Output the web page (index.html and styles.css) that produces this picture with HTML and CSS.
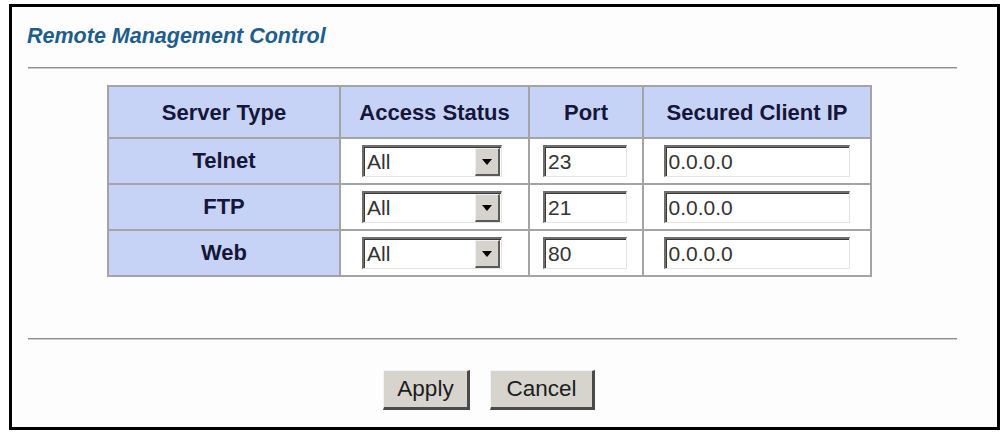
FILE: index.html
```html
<!DOCTYPE html>
<html>
<head>
<meta charset="utf-8">
<link rel="stylesheet" href="styles.css">
</head>
<body>
<div class="frame">
  <div class="title">Remote Management Control</div>
  <div class="rule rule-top"></div>
  <div class="grid">
    <div class="cell head">Server Type</div>
    <div class="cell head">Access Status</div>
    <div class="cell head">Port</div>
    <div class="cell head">Secured Client IP</div>

    <div class="cell label">Telnet</div>
    <div class="cell"><div class="select"><span class="val">All</span><span class="arrow"><span class="tri"></span></span></div></div>
    <div class="cell"><div class="field port">23</div></div>
    <div class="cell"><div class="field ip">0.0.0.0</div></div>

    <div class="cell label">FTP</div>
    <div class="cell"><div class="select"><span class="val">All</span><span class="arrow"><span class="tri"></span></span></div></div>
    <div class="cell"><div class="field port">21</div></div>
    <div class="cell"><div class="field ip">0.0.0.0</div></div>

    <div class="cell label">Web</div>
    <div class="cell"><div class="select"><span class="val">All</span><span class="arrow"><span class="tri"></span></span></div></div>
    <div class="cell"><div class="field port">80</div></div>
    <div class="cell"><div class="field ip">0.0.0.0</div></div>
  </div>
  <div class="rule rule-bottom"></div>
  <div class="buttons">
    <div class="btn apply">Apply</div>
    <div class="btn cancel">Cancel</div>
  </div>
</div>
</body>
</html>
```
FILE: styles.css
```css
* { box-sizing: border-box; }
html, body { margin: 0; padding: 0; background: #fff; }
body { font-family: "Liberation Sans", Arial, sans-serif; }

.frame {
  margin: 4px 0 0 9px;
  width: 991px;
  height: 426px;
  border: 3px solid #000;
  background: #fdfdfd;
  display: flex;
  flex-direction: column;
  padding-top: 17px;
}

.title {
  font-size: 21.5px;
  line-height: 24px;
  font-weight: bold;
  font-style: italic;
  color: #1f5d8c;
  padding-left: 15px;
  height: 24px;
}

.rule {
  height: 2px;
  margin-left: 16px;
  width: 929px;
  border-top: 1px solid #909090;
  border-bottom: 1px solid #cccccc;
}
.rule-top { margin-top: 19px; }
.rule-bottom { margin-top: 61px; }

.grid {
  margin-top: 16px;
  margin-left: 95px;
  width: 765px;
  display: grid;
  grid-template-columns: 230px 187px 112px 226px;
  grid-template-rows: 50px 44px 44px 44px;
  gap: 2px;
  padding: 2px;
  background: #a4a4a4;
}

.cell {
  background: #fff;
  display: flex;
  align-items: center;
  justify-content: center;
}
.cell.head, .cell.label {
  background: #c7d3f6;
  font-weight: bold;
  font-size: 22px;
  color: #15163a;
}
.cell.head { padding-top: 2px; }

.select, .field {
  height: 32px;
  background: #fff;
  border-top: 2px solid #6e6e6e;
  border-left: 2px solid #6e6e6e;
  border-right: 1px solid #e4e4e4;
  border-bottom: 1px solid #e4e4e4;
  box-shadow: inset 1px 1px 0 #3a3a3a;
  font-size: 21px;
  color: #333;
  display: flex;
  align-items: center;
  padding-left: 3px;
}
.select { width: 140px; margin-right: 5px; padding-right: 1px; }
.select .val { flex: 1; }
.port { width: 84px; margin-right: 2px; }
.ip { width: 186px; margin-right: 1px; }

.arrow {
  width: 25px;
  height: 28px;
  background: #d6d3cc;
  border-top: 1px solid #f0f0f0;
  border-left: 1px solid #f0f0f0;
  border-right: 2px solid #5a5a5a;
  border-bottom: 2px solid #5a5a5a;
  display: flex;
  align-items: center;
  justify-content: center;
  margin-top: 1px;
}
.tri {
  width: 0;
  height: 0;
  border-left: 5px solid transparent;
  border-right: 5px solid transparent;
  border-top: 6px solid #000;
}

.buttons {
  margin-top: 30px;
  margin-left: 371px;
  display: flex;
  gap: 20px;
}
.btn {
  height: 40px;
  background: #d7d4ce;
  border-top: 1px solid #f4f4f4;
  border-left: 1px solid #f4f4f4;
  border-right: 3px solid #4a4a4a;
  border-bottom: 3px solid #4a4a4a;
  font-size: 22.5px;
  color: #1c1c1c;
  display: flex;
  align-items: center;
  justify-content: center;
}
.apply { width: 87px; }
.cancel { width: 105px; }
```
